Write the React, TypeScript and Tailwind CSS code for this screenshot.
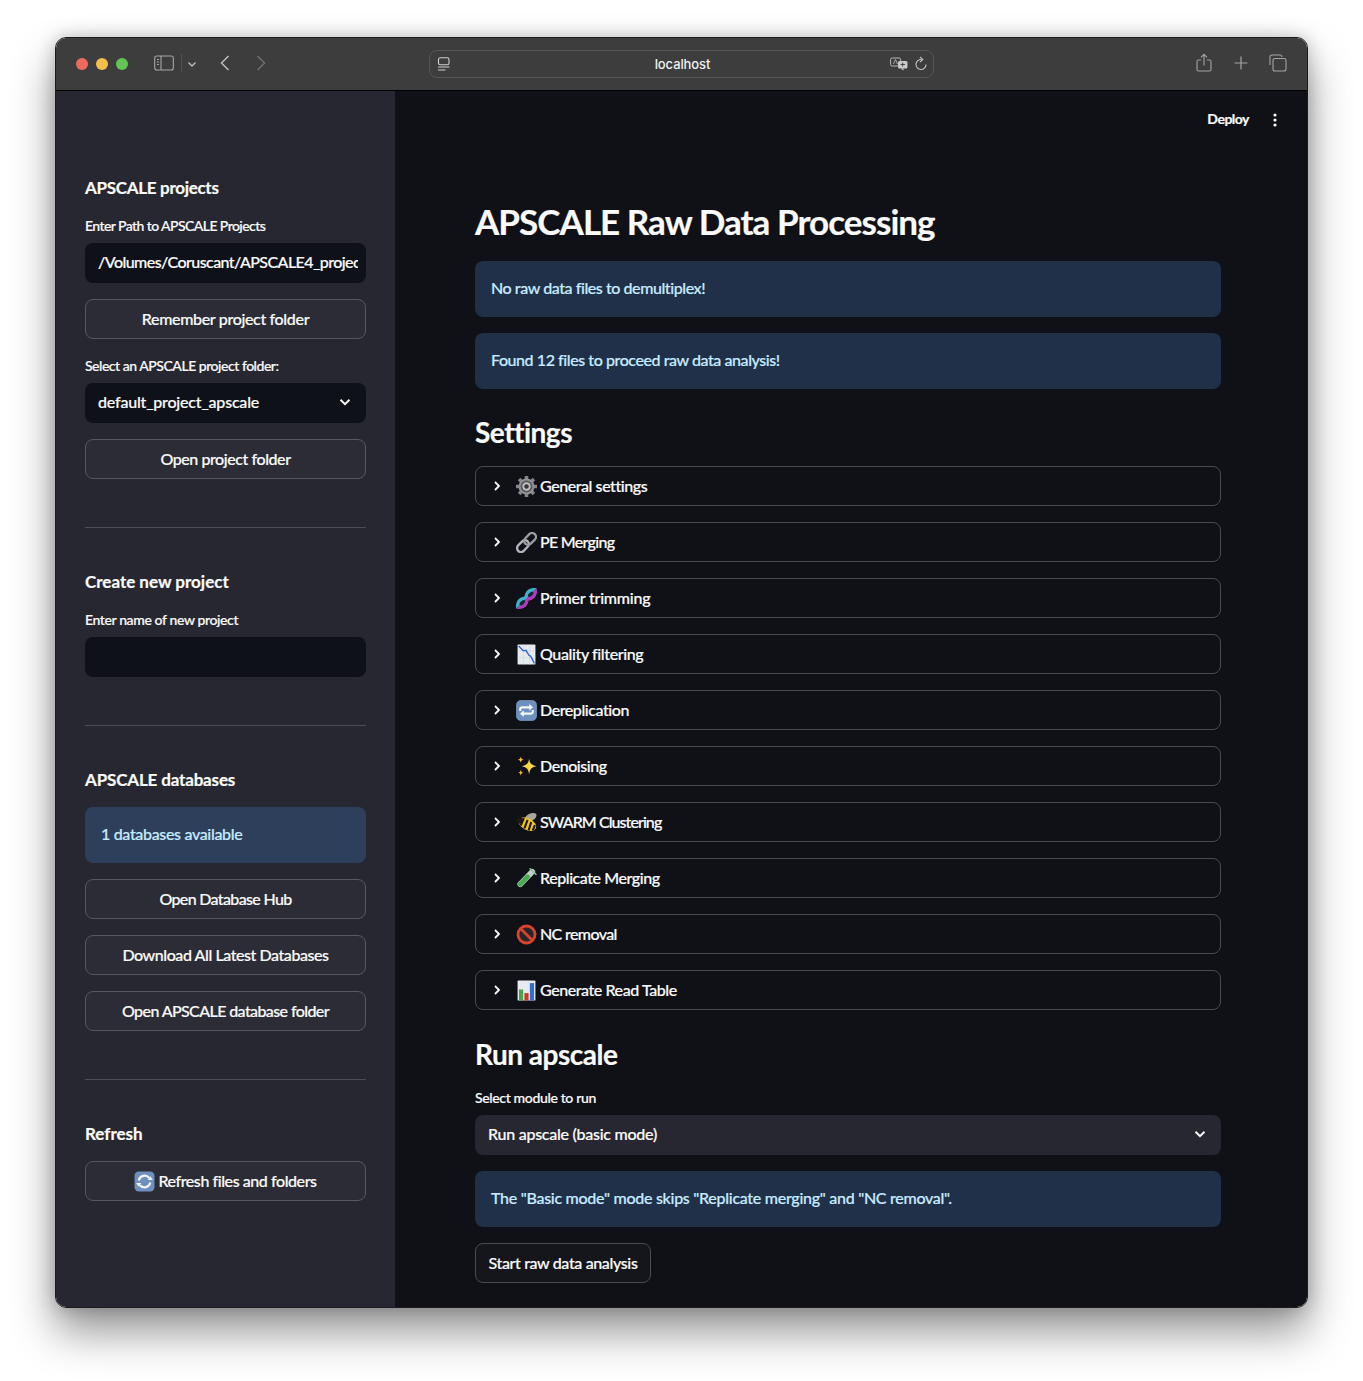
import React from "react";

const I = ({ s = 21, children, vb = "0 0 20 20", cls = "" }: { s?: number; children: React.ReactNode; vb?: string; cls?: string }) => (
  <svg width={s} height={s} viewBox={vb} className={"shrink-0 " + cls} fill="none">{children}</svg>
);

const Gear = () => (
  <I>
    <g stroke="#858588" strokeWidth="3.400">
      <path d="M10 0v20M0 10h20M2.900 2.900l14.200 14.200M17.100 2.900L2.900 17.100" />
    </g>
    <circle cx="10" cy="10" r="7.600" fill="#929295" />
    <circle cx="10" cy="10" r="5.600" fill="#58585c" />
    <circle cx="10" cy="10" r="4" fill="#c0c0c2" />
    <circle cx="10" cy="10" r="2.200" fill="#38383c" />
  </I>
);
const LinkE = () => (
  <I>
    <g transform="rotate(-45 10 10)" strokeWidth="2.200">
      <rect x="-1.200" y="6.300" width="12.800" height="7.400" rx="3.700" stroke="#b3b5bb" />
      <rect x="8.400" y="6.300" width="12.800" height="7.400" rx="3.700" stroke="#9a9da4" />
    </g>
  </I>
);
const Lens = ({ cx, cy }: { cx: number; cy: number }) => (
  <g transform={`translate(${cx} ${cy}) rotate(-45)`}>
    <path d="M-8 0C-4 -6.500 4 -6.500 8 0Z" fill="#3db4c6" />
    <path d="M-8 0C-4 6.500 4 6.500 8 0Z" fill="#b03cbf" />
    <ellipse cx="0" cy="0" rx="3.200" ry="1.700" fill="#1d2236" />
  </g>
);
const Dna = () => (
  <I>
    <Lens cx={6} cy={14} />
    <Lens cx={14} cy={6} />
  </I>
);
const ChartDown = () => (
  <I>
    <rect x="1.500" y="0.500" width="17" height="19" rx="0.800" fill="#e7eaf0" />
    <path d="M1.500 6.500h17M1.500 13h17M7 .5v19M13 .5v19" stroke="#cfd4de" strokeWidth="0.500" />
    <path d="M2.500 2l4.500 4.500 2.500-.5 3 5 1.500.5 3.500 7" stroke="#2d66c6" strokeWidth="1.300" />
  </I>
);
const Repeat = () => (
  <I>
    <rect x="0.500" y="0.500" width="19" height="19" rx="4" fill="#6d90bf" />
    <rect x="0.500" y="0.500" width="19" height="19" rx="4" stroke="#8aa8d2" strokeWidth="0.600" />
    <path d="M4 10.500V9a2 2 0 0 1 2-2h8M16 9.500V11a2 2 0 0 1-2 2H6" stroke="#f2f4f8" strokeWidth="2" />
    <path d="M12.600 3.800l3.600 3.200-3.600 3.200zM7.400 9.800L3.800 13l3.600 3.200z" fill="#f2f4f8" />
  </I>
);
const Sparkles = () => (
  <I>
    <path d="M12.500 2.500c.8 4.500 1.800 6 7 7.300-5.200 1.300-6.200 2.700-7 7.700-.8-5-1.800-6.400-7-7.700 5.200-1.300 6.200-2.800 7-7.300z" fill="#fbd54a" />
    <path d="M4.500 .5c.4 2 .9 2.600 2.800 3-1.900.3-2.400 1-2.800 3-.3-2-.9-2.700-2.800-3 1.900-.4 2.500-1 2.800-3zM4.500 13c.3 1.900.8 2.500 2.600 2.900-1.800.3-2.300.9-2.600 2.900-.3-2-.8-2.600-2.600-2.900 1.800-.4 2.300-1 2.600-2.900z" fill="#f6bd2c" />
  </I>
);
const Bee = () => (
  <I>
    <ellipse cx="14" cy="5" rx="6" ry="3.400" transform="rotate(-28 14 5)" fill="#a9a69d" />
    <ellipse cx="10.800" cy="11.500" rx="9" ry="5.600" transform="rotate(28 10.800 11.500)" fill="#edc22a" />
    <path d="M7.500 5.500L4.500 13M11 7.500L8 15.500M14.500 9.500L12 17.500M18 12.500l-2 5" stroke="#1d1910" strokeWidth="2" />
    <circle cx="3.600" cy="8" r="3.100" fill="#1d1910" />
    <path d="M2 5.500L1 3M4 5L4.500 2.800" stroke="#1d1910" strokeWidth="0.800" />
  </I>
);
const Tube = () => (
  <I>
    <path d="M15.500 3.500L4 15.500" stroke="#bfcfc6" strokeWidth="5.400" strokeLinecap="round" />
    <path d="M11 8.200L4 15.500" stroke="#48ab4c" strokeWidth="4.400" strokeLinecap="round" />
    <path d="M13.500 .8l5.500 5.200" stroke="#8fc39a" strokeWidth="1.500" strokeLinecap="round" />
  </I>
);
const NoEntry = () => (
  <I>
    <circle cx="10" cy="10" r="8.100" fill="#24262c" stroke="#d9432d" strokeWidth="2.700" />
    <path d="M4.300 4.300l11.400 11.400" stroke="#d9432d" strokeWidth="2.700" />
  </I>
);
const Bars = () => (
  <I>
    <rect x="1.500" y="0.500" width="17" height="19" rx="0.800" fill="#e7eaf0" />
    <rect x="2.800" y="9" width="4" height="10.500" fill="#45a84e" />
    <rect x="8" y="12.500" width="4" height="7" fill="#d3352b" />
    <rect x="13.200" y="3" width="4" height="16.500" fill="#2f6fd0" />
  </I>
);
const RefreshE = () => (
  <I>
    <rect x="0.500" y="0.500" width="19" height="19" rx="4" fill="#6d90bf" />
    <path d="M4.500 9a5.700 5.700 0 0 1 10-2.500M15.500 11a5.700 5.700 0 0 1-10 2.500" stroke="#f2f4f8" strokeWidth="2.100" />
    <path d="M13 8.500h5L15.500 5zM7 11.500H2L4.500 15z" fill="#f2f4f8" />
  </I>
);

const Chevron = ({ cls = "" }: { cls?: string }) => (
  <svg width="14" height="14" viewBox="0 0 14 14" fill="none" className={cls}>
    <path d="M2.500 4.800L7 9.200l4.500-4.400" stroke="#fafafa" strokeWidth="1.900" />
  </svg>
);

const Heading = ({ children, cls = "tracking-[-0.1px]" }: { children: React.ReactNode; cls?: string }) => (
  <div className={"flex h-[34px] items-center text-[17px] font-bold text-[#fafafa] " + cls}>{children}</div>
);
const Label = ({ children, cls = "tracking-[-0.5px]" }: { children: React.ReactNode; cls?: string }) => (
  <div className={"mb-[8px] flex h-5 items-center text-[14px] font-medium text-[#fafafa] " + cls}>{children}</div>
);
const SideButton = ({ children, cls = "tracking-[-0.43px]" }: { children: React.ReactNode; cls?: string }) => (
  <button className={"mt-4 flex h-10 w-full items-center justify-center rounded-lg border border-[#57585f] bg-[#2b2c35] text-[16px] font-medium text-[#fafafa] " + cls}>
    {children}
  </button>
);
const Hr = ({ cls = "" }: { cls?: string }) => <div className={"h-px bg-[#4b4c54] " + cls} />;
const Info = ({ children, cls = "" }: { children: React.ReactNode; cls?: string }) => (
  <div className={"flex h-14 items-center rounded-lg px-4 pb-[2px] text-[16px] font-medium text-[#c7ebff] " + cls}>{children}</div>
);

const expanders: [string, React.ReactNode, string][] = [
  ["General settings", <Gear />, "tracking-[-0.43px]"],
  ["PE Merging", <LinkE />, "tracking-[-0.7px]"],
  ["Primer trimming", <Dna />, "tracking-[-0.23px]"],
  ["Quality filtering", <ChartDown />, "tracking-[-0.38px]"],
  ["Dereplication", <Repeat />, "tracking-[-0.43px]"],
  ["Denoising", <Sparkles />, "tracking-[-0.43px]"],
  ["SWARM Clustering", <Bee />, "tracking-[-0.93px]"],
  ["Replicate Merging", <Tube />, "tracking-[-0.43px]"],
  ["NC removal", <NoEntry />, "tracking-[-0.63px]"],
  ["Generate Read Table", <Bars />, "tracking-[-0.43px]"],
];

export default function App() {
  return (
    <div className="h-[1381px] w-[1363px] overflow-hidden bg-white pl-[55px] pt-[37px] [-webkit-text-stroke:0.2px]" style={{ fontFamily: '"Lato", "Noto Sans", sans-serif' }}>
      <div className="flex h-[1271px] w-[1253px] flex-col overflow-hidden rounded-[11px] border border-[#1c1c1c] shadow-[0_24px_44px_rgba(0,0,0,0.42),0_0_18px_rgba(0,0,0,0.22)]">
        {/* title bar */}
        <div className="flex h-[53px] shrink-0 items-center border-b border-black bg-[#3c3d3c] pl-[20px] pr-[19px]">
          <div className="flex gap-2">
            <span className="h-3 w-3 rounded-full bg-[#ee6a5e]" />
            <span className="h-3 w-3 rounded-full bg-[#f5bd4f]" />
            <span className="h-3 w-3 rounded-full bg-[#61c454]" />
          </div>
          <svg width="20" height="16" viewBox="0 0 20 16" fill="none" className="ml-[26px] -translate-y-px">
            <rect x="0.700" y="1" width="18.600" height="14" rx="2" stroke="#a6a7a6" strokeWidth="1.100" />
            <path d="M7 1v14" stroke="#a6a7a6" strokeWidth="1.100" />
            <path d="M3 4.500h2M3 7h2M3 9.500h2" stroke="#a6a7a6" strokeWidth="1" />
          </svg>
          <div className="ml-[7px] h-[18px] w-px -translate-y-px bg-[#4f504f]" />
          <svg width="10" height="10" viewBox="0 0 10 10" fill="none" className="ml-[5px]">
            <path d="M1.500 3.500L5 7l3.500-3.500" stroke="#bdbebd" strokeWidth="1.300" />
          </svg>
          <svg width="12" height="18" viewBox="0 0 12 18" fill="none" className="ml-[22px] -translate-y-px">
            <path d="M9.500 2L2.500 9l7 7" stroke="#bcbdbc" strokeWidth="1.500" />
          </svg>
          <svg width="12" height="18" viewBox="0 0 12 18" fill="none" className="ml-[24px] -translate-y-px">
            <path d="M2.500 2l7 7-7 7" stroke="#6d6e6d" strokeWidth="1.500" />
          </svg>
          {/* address */}
          <div className="relative ml-[162px] flex h-7 w-[505px] items-center justify-center rounded-lg border border-[#555655]">
            <svg width="14" height="15" viewBox="0 0 14 15" fill="none" className="absolute left-[7px] top-[6px]">
              <rect x="1.500" y="0.800" width="10.500" height="7" rx="1.800" stroke="#cfd0cf" strokeWidth="1.100" />
              <path d="M1 10h11.500M1 13h7.500" stroke="#cfd0cf" strokeWidth="1.100" />
            </svg>
            <span className="translate-x-px translate-y-px text-[13px] font-medium tracking-[-0.1px] text-[#f0f0f0] [-webkit-text-stroke:0px]" style={{ fontFamily: '"Inter", sans-serif' }}>localhost</span>
            <svg width="18" height="14" viewBox="0 0 18 14" fill="none" className="absolute right-[25px] top-[6px]">
              <rect x="0.600" y="1" width="10" height="8" rx="1.500" stroke="#b5b6b5" strokeWidth="1" />
              <path d="M3.500 7l2-4.500L7.500 7" stroke="#b5b6b5" strokeWidth="0.900" />
              <rect x="8" y="4" width="9.500" height="7.500" rx="1.500" fill="#c9cac9" />
              <path d="M11 12l2.500 1.500V11" fill="#c9cac9" />
              <path d="M10.500 7.500h4.500M12.700 5.500v4" stroke="#3c3d3c" strokeWidth="0.900" />
            </svg>
            <svg width="14" height="16" viewBox="0 0 14 16" fill="none" className="absolute right-[5px] top-[5px]">
              <path d="M7.500 3.500A5 5 0 1 0 12 8.500" stroke="#c2c3c2" strokeWidth="1.100" />
              <path d="M6 0.800L8.800 3.500 6 6" stroke="#c2c3c2" strokeWidth="1.100" />
            </svg>
          </div>
          {/* right icons */}
          <svg width="16" height="20" viewBox="0 0 16 20" fill="none" className="ml-[262px] -translate-y-px">
            <path d="M5 7H2.500A1.500 1.500 0 0 0 1 8.500v8A1.500 1.500 0 0 0 2.500 18h11a1.500 1.500 0 0 0 1.500-1.500v-8A1.500 1.500 0 0 0 13.500 7H11" stroke="#a3a4a3" strokeWidth="1.100" />
            <path d="M8 12.500V1.500M5 4.300L8 1.300l3 3" stroke="#a3a4a3" strokeWidth="1.100" />
          </svg>
          <svg width="14" height="14" viewBox="0 0 14 14" fill="none" className="ml-[22px] -translate-y-px">
            <path d="M7 0.500v13M0.500 7h13" stroke="#a3a4a3" strokeWidth="1.200" />
          </svg>
          <svg width="18" height="18" viewBox="0 0 18 18" fill="none" className="ml-[21px] -translate-y-px">
            <path d="M1 11V3a2 2 0 0 1 2-2h8a2 2 0 0 1 2 2" stroke="#a3a4a3" strokeWidth="1.100" />
            <rect x="4" y="4.500" width="13" height="12.500" rx="2" stroke="#a3a4a3" strokeWidth="1.100" />
          </svg>
        </div>

        <div className="flex min-h-0 flex-1">
          {/* sidebar */}
          <aside className="w-[339px] shrink-0 bg-[#262730] px-[29px] pt-[80px]">
            <Heading cls="tracking-[-0.3px]">APSCALE projects</Heading>
            <div className="mt-[10px]"><Label cls="tracking-[-0.57px]">Enter Path to APSCALE Projects</Label></div>
            <input
              readOnly
              value="/Volumes/Coruscant/APSCALE4_projects"
              className="block h-10 w-full rounded-lg bg-[#0e1117] pb-[3px] pl-[13px] pr-2 text-[16px] font-medium tracking-[-0.57px] text-[#fafafa] outline-none"
            />
            <SideButton cls="tracking-[-0.34px]">Remember project folder</SideButton>
            <div className="mt-[16px]"><Label cls="tracking-[-0.47px]">Select an APSCALE project folder:</Label></div>
            <div className="flex h-10 items-center justify-between rounded-lg bg-[#0e1117] pb-[2px] pl-[13px] pr-[14px] text-[16px] font-medium tracking-[-0.2px] text-[#fafafa]">
              default_project_apscale
              <Chevron />
            </div>
            <SideButton>Open project folder</SideButton>
            <Hr cls="mt-12" />
            <Heading cls="mt-[37px] tracking-[0px]">Create new project</Heading>
            <div className="mt-[10px]"><Label cls="tracking-[-0.38px]">Enter name of new project</Label></div>
            <div className="h-10 rounded-lg bg-[#0e1117]" />
            <Hr cls="mt-12" />
            <Heading cls="mt-[37px] tracking-[-0.16px]">APSCALE databases</Heading>
            <Info cls="mt-[10px] bg-[#2e3f5c] tracking-[-0.33px]">1 databases available</Info>
            <SideButton cls="tracking-[-0.66px]">Open Database Hub</SideButton>
            <SideButton>Download All Latest Databases</SideButton>
            <SideButton cls="tracking-[-0.6px]">Open APSCALE database folder</SideButton>
            <Hr cls="mt-12" />
            <Heading cls="mt-[37px] tracking-[0px]">Refresh</Heading>
            <div className="-mt-[6px]"><SideButton cls="gap-[3px] tracking-[-0.43px]"><RefreshE />Refresh files and folders</SideButton></div>
          </aside>

          {/* main */}
          <main className="relative flex-1 bg-[#0f1116] pl-[80px] pr-[86px] pt-[108px]">
            <div className="absolute right-[30px] top-[18px] flex items-center">
              <span className="-translate-y-px text-[14px] font-bold tracking-[-0.5px] text-[#fafafa]">Deploy</span>
              <svg width="4" height="16" viewBox="0 0 4 16" className="ml-6"><circle cx="2" cy="3" r="1.600" fill="#fafafa" /><circle cx="2" cy="8" r="1.600" fill="#fafafa" /><circle cx="2" cy="13" r="1.600" fill="#fafafa" /></svg>
            </div>
            <h1 className="flex h-[44px] items-center text-[35px] font-bold tracking-[-0.95px] text-[#fafafa]">APSCALE Raw Data Processing</h1>
            <Info cls="mt-[18px] bg-[#1f3048] tracking-[-0.43px]">No raw data files to demultiplex!</Info>
            <Info cls="mt-4 bg-[#1f3048] tracking-[-0.43px]">Found 12 files to proceed raw data analysis!</Info>
            <h2 className="mt-[24px] flex h-[38px] items-center text-[28px] font-bold tracking-[-0.5px] text-[#fafafa]">Settings</h2>
            <div className="mt-[15px] flex flex-col gap-4">
              {expanders.map(([t, icon, track]) => (
                <div key={t} className={"flex h-10 items-center rounded-lg border border-[#4a4b50] pl-[15px] text-[16px] font-medium text-[#fafafa] " + track}>
                  <svg width="12" height="12" viewBox="0 0 12 12" fill="none"><path d="M4 2L8 6 4 10" stroke="#fafafa" strokeWidth="1.800" /></svg>
                  <span className="ml-[13px] mr-[4px] flex w-5 justify-center">{icon}</span>
                  {t}
                </div>
              ))}
            </div>
            <h2 className="mt-[25px] flex h-[38px] items-center text-[28px] font-bold tracking-[-0.5px] text-[#fafafa]">Run apscale</h2>
            <div className="mt-[14px]"><Label cls="tracking-[-0.35px]">Select module to run</Label></div>
            <div className="flex h-10 items-center justify-between rounded-lg bg-[#262730] pb-[2px] pl-[13px] pr-[14px] text-[16px] font-medium tracking-[-0.26px] text-[#fafafa]">
              Run apscale (basic mode)
              <Chevron />
            </div>
            <Info cls="mt-4 bg-[#1f3048] tracking-[-0.28px]">The "Basic mode" mode skips "Replicate merging" and "NC removal".</Info>
            <button className="mt-4 flex h-10 w-[176px] items-center justify-center rounded-lg border border-[#4a4b50] bg-[#14161c] text-[16px] font-medium tracking-[-0.36px] text-[#fafafa]">Start raw data analysis</button>
          </main>
        </div>
      </div>
    </div>
  );
}
